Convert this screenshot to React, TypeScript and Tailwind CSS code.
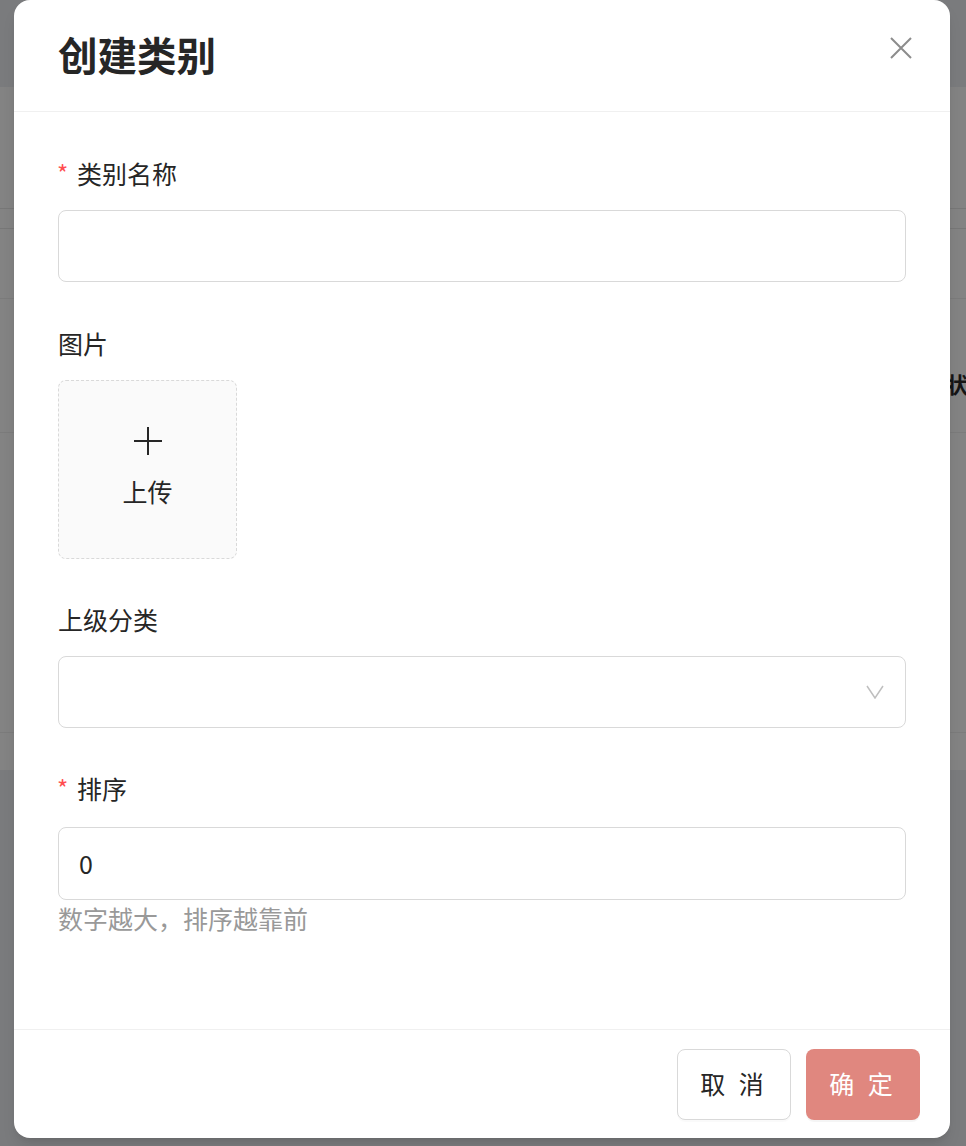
import React from "react";

const font = { fontFamily: '"Noto Sans CJK SC", "Noto Sans", sans-serif' };

const Label: React.FC<{ text: string; required?: boolean }> = ({ text, required }) => (
  <div className="flex items-center h-[34px] text-[25px] leading-[34px] text-[#262626]">
    {required && <span className="text-[#ff4d4f] text-[24px] w-[20px] leading-[34px] ml-[-1px]">*</span>}
    <span>{text}</span>
  </div>
);

const App: React.FC = () => {
  return (
    <div className="relative w-[966px] h-[1146px] overflow-hidden bg-[#7a7b7d]" style={font}>
      {/* page behind the overlay */}
      <div className="flex flex-col">
        <div className="h-[87px] bg-[#7a7b7d]" />
        <div className="h-[122px] bg-[#838383] border-b border-[#777777]" />
        <div className="h-[20px] bg-[#838383] border-b border-[#777777]" />
        <div className="h-[70px] bg-[#838383] border-b border-[#7b7b7b]" />
        <div className="h-[134px] bg-[#838383] border-b border-[#7b7b7b] pt-[68px] pl-[946px]">
          <span className="text-[22px] font-bold text-[#151515] whitespace-nowrap">状态</span>
        </div>
        <div className="h-[300px] bg-[#838383] border-b border-[#7b7b7b]" />
        <div className="h-[37px] bg-[#838383]" />
      </div>

      {/* modal */}
      <div className="absolute left-[14px] top-0 w-[936px] h-[1138px] rounded-[16px] bg-white flex flex-col shadow-lg">
        <div className="h-[112px] flex items-center justify-between px-[44px] border-b border-[#f0f0f0]">
          <h1 className="text-[39.5px] font-bold text-[#262626] leading-none mt-[-4px]">创建类别</h1>
          <svg width="22" height="22" viewBox="0 0 22 22" className="mr-[-6px] mt-[-16px]">
            <path d="M1 1 L21 21 M21 1 L1 21" stroke="#8c8c8c" strokeWidth="2" />
          </svg>
        </div>

        <div className="flex-1 px-[44px] pt-[44px]">
          <Label text="类别名称" required />
          <div className="mt-[20px] h-[72px] rounded-[8px] border border-[#d9d9d9]" />

          <div className="mt-[44px]">
            <Label text="图片" />
          </div>
          <div className="mt-[20px] w-[179px] h-[179px] rounded-[8px] border border-dashed border-[#d9d9d9] bg-[#fafafa] flex flex-col items-center justify-center">
            <svg width="30" height="30" viewBox="0 0 30 30" className="mt-[-8px]">
              <path d="M15 1 V29 M1 15 H29" stroke="#262626" strokeWidth="2" />
            </svg>
            <span className="mt-[20px] text-[25px] leading-[30px] text-[#262626]">上传</span>
          </div>

          <div className="mt-[43px]">
            <Label text="上级分类" />
          </div>
          <div className="mt-[20px] h-[72px] rounded-[8px] border border-[#d9d9d9] flex items-center justify-end pr-[21px]">
            <svg width="18" height="14" viewBox="0 0 18 14">
              <path d="M1 1 L9 13 L17 1" fill="none" stroke="#bfbfbf" strokeWidth="1.5" />
            </svg>
          </div>

          <div className="mt-[43px]">
            <Label text="排序" required />
          </div>
          <div className="mt-[22px] h-[73px] rounded-[8px] border border-[#d9d9d9] flex items-center px-[20px] text-[25px] text-[#262626]">
            0
          </div>
          <div className="mt-[0px] text-[25px] leading-[36px] text-[#999999]">数字越大，排序越靠前</div>
        </div>

        <div className="h-[109px] border-t border-[#f0f0f0] flex items-center justify-end gap-[15px] pr-[30px]">
          <button className="w-[114px] h-[71px] rounded-[8px] border border-[#d9d9d9] bg-white text-[25px] text-[#262626] tracking-[4px] shadow-[0_2px_0_rgba(0,0,0,0.02)]">
            取 消
          </button>
          <button className="w-[114px] h-[71px] rounded-[8px] bg-[#e0877f] text-[25px] text-white tracking-[4px] shadow-[0_2px_0_rgba(0,0,0,0.04)]">
            确 定
          </button>
        </div>
      </div>
    </div>
  );
};

export default App;
